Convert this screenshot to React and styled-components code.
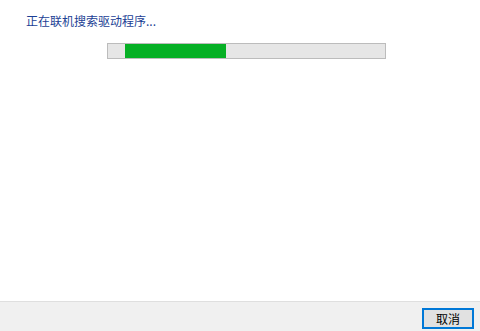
import React from "react";
import styled, { createGlobalStyle } from "styled-components";

const Global = createGlobalStyle`
  html, body {
    margin: 0;
    padding: 0;
    background: #ffffff;
  }
  body {
    font-family: "Noto Sans CJK SC", "Liberation Sans", sans-serif;
  }
`;

const Window = styled.div`
  width: 480px;
  height: 331px;
  display: flex;
  flex-direction: column;
  background: #ffffff;
`;

const Body = styled.div`
  flex: 1;
  padding: 12px 0 0 26px;
  display: flex;
  flex-direction: column;
`;

const Title = styled.div`
  font-size: 12px;
  line-height: 17px;
  color: #1c3f95;
  height: 17px;
`;

const Track = styled.div`
  margin: 14px 0 0 81px;
  width: 277px;
  height: 14px;
  border: 1px solid #bcbcbc;
  background: #e6e6e6;
  position: relative;
`;

const Fill = styled.div`
  position: absolute;
  top: 0;
  bottom: 0;
  background: #06b025;
`;

const Footer = styled.div`
  height: 30px;
  box-sizing: border-box;
  border-top: 1px solid #dfdfdf;
  background: #f0f0f0;
  display: flex;
  justify-content: flex-end;
  align-items: flex-start;
  padding: 6px 6px 0 0;
`;

const Button = styled.button`
  width: 52px;
  height: 21px;
  box-sizing: border-box;
  border: 1px solid #0078d7;
  box-shadow: inset 0 0 0 1px #0078d7;
  background: #e1e1e1;
  font-family: "Noto Sans CJK SC", sans-serif;
  font-size: 12px;
  color: #000;
  padding: 0;
  line-height: 17px;
`;

export default function App() {
  const progress = { left: 17, width: 101 };
  return (
    <>
      <Global />
      <Window>
        <Body>
          <Title>正在联机搜索驱动程序...</Title>
          <Track>
            <Fill style={{ left: progress.left, width: progress.width }} />
          </Track>
        </Body>
        <Footer>
          <Button>取消</Button>
        </Footer>
      </Window>
    </>
  );
}
